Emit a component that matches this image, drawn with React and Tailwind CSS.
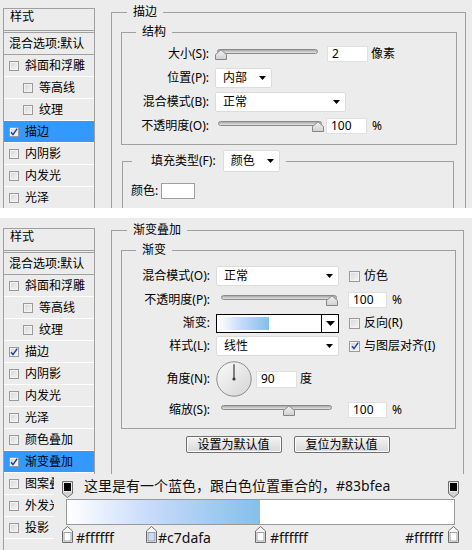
import React from "react";

const F = "font-['Noto_Sans','Noto_Sans_CJK_SC',sans-serif]";

function Check({ checked, small }) {
  return (
    <span
      className={`flex items-center justify-center shrink-0 border border-[#9a9a9a] bg-gradient-to-br from-[#d6d6d6] to-[#f6f6f6] shadow-[inset_0_0_0_1px_#f2f2f2] ${
        small ? "w-[10px] h-[10px]" : "w-[11px] h-[11px]"
      }`}
    >
      {checked && (
        <svg width="8" height="8" viewBox="0 0 8 8">
          <path d="M1 4.2 L3 6.6 L7.2 0.6" fill="none" stroke="#24429e" strokeWidth="1.5" />
        </svg>
      )}
    </span>
  );
}

function Arrow() {
  return (
    <svg width="7" height="4" viewBox="0 0 7 4" className="shrink-0">
      <path d="M0 0H7L3.5 4Z" fill="#000" />
    </svg>
  );
}

function Select({ text, className }) {
  return (
    <div
      className={`flex items-center justify-between bg-white border border-[#dcdcdc] rounded-[2px] pl-[7px] pr-[5px] ${className}`}
    >
      <span>{text}</span>
      <Arrow />
    </div>
  );
}

function Input({ v, className }) {
  return (
    <div className={`bg-white border border-[#e0e0e0] flex items-center pl-[4px] ${className}`}>{v}</div>
  );
}

function Thumb({ className }) {
  return (
    <svg className={`absolute top-[1px] ${className}`} width="12" height="11" viewBox="0 0 12 11">
      <defs>
        <linearGradient id="thg" x1="0" y1="0" x2="0" y2="1">
          <stop offset="0" stopColor="#f4f4f4" />
          <stop offset="1" stopColor="#cfcfcf" />
        </linearGradient>
      </defs>
      <path d="M0.5 10.5V5.6L6 0.8L11.5 5.6V10.5Z" fill="url(#thg)" stroke="#858585" />
    </svg>
  );
}

function Slider({ className, trackClass, thumbClass }) {
  return (
    <div className={`relative h-[12px] ${className}`}>
      <div
        className={`mt-[1px] h-[5px] rounded-full border border-[#8a8a8a] bg-gradient-to-b from-[#a9a9a9] to-[#e4e4e4] ${trackClass}`}
      />
      <Thumb className={thumbClass} />
    </div>
  );
}

const ITEMS = [
  ["斜面和浮雕", 0],
  ["等高线", 1],
  ["纹理", 1],
  ["描边", 0],
  ["内阴影", 0],
  ["内发光", 0],
  ["光泽", 0],
  ["颜色叠加", 0],
  ["渐变叠加", 0],
  ["图案叠加", 0],
  ["外发光", 0],
  ["投影", 0],
];

function StyleList({ selected, checked, count, className }) {
  return (
    <div
      className={`w-[92px] shrink-0 self-stretch overflow-hidden border-x border-t border-[#a0a0a0] ${className}`}
    >
      <div className="h-[22px] border-b border-[#a0a0a0] pl-[6px] leading-[14px] pt-[1px]">样式</div>
      <div className="mt-[1px] h-[23px] border-y border-[#a0a0a0] pl-[5px] flex items-center whitespace-nowrap">
        混合选项:默认
      </div>
      {ITEMS.slice(0, count).map(([name, indent], i) => (
        <div
          key={name}
          className={`h-[22px] border-b border-white flex items-center gap-[6px] ${
            indent ? "pl-[19px]" : "pl-[5px]"
          } ${i === selected ? "bg-[#3399ff]" : ""}`}
        >
          <Check small checked={checked.includes(i)} />
          <span className="whitespace-nowrap">{name}</span>
        </div>
      ))}
    </div>
  );
}

function Row({ label, children, className, labelClass }) {
  return (
    <div className={`flex items-center ${className}`}>
      <div className={`text-right shrink-0 whitespace-nowrap ${labelClass}`}>{label}</div>
      <div className="ml-[6px] flex items-center">{children}</div>
    </div>
  );
}

function TopPanel() {
  return (
    <div className="h-[208px] bg-[#ececec] flex pl-[3px] overflow-hidden">
      <StyleList selected={3} checked={[3]} count={7} className="mt-[8px]" />
      <fieldset className="ml-[16px] mt-[4px] w-[355px] h-[260px] shrink-0 self-start border border-[#a0a0a0]">
        <legend className="ml-[15px] px-[6px] leading-[16px]">描边</legend>
        <fieldset className="ml-[9px] mr-[8px] mt-[4px] pt-[2px] pb-[6px] border border-[#a0a0a0]">
          <legend className="ml-[14px] px-[6px] leading-[16px]">结构</legend>
          <Row label="大小(S):" className="h-[24px]" labelClass="w-[87px]">
            <Slider className="w-[104px]" trackClass="ml-[2px] w-[101px]" thumbClass="left-0" />
            <Input v="2" className="ml-[8px] w-[41px] h-[16px]" />
            <span className="ml-[3px]">像素</span>
          </Row>
          <Row label="位置(P):" className="h-[24px]" labelClass="w-[87px]">
            <Select text="内部" className="w-[57px] h-[20px]" />
          </Row>
          <Row label="混合模式(B):" className="h-[24px]" labelClass="w-[87px]">
            <Select text="正常" className="w-[131px] h-[20px]" />
          </Row>
          <Row label="不透明度(O):" className="h-[24px]" labelClass="w-[87px]">
            <Slider className="w-[108px]" trackClass="ml-[3px] w-[104px]" thumbClass="left-[97px]" />
            <Input v="100" className="ml-[3px] w-[41px] h-[16px]" />
            <span className="ml-[5px]">%</span>
          </Row>
        </fieldset>
        <fieldset className="ml-[10px] mr-[11px] mt-[5px] h-[120px] border border-[#a0a0a0]">
          <legend className="ml-[9px] pl-[19px] pr-[6px]">
            <div className="flex items-center h-[22px]">
              <span>填充类型(F):</span>
              <Select text="颜色" className="ml-[7px] w-[57px] h-[22px]" />
            </div>
          </legend>
          <div className="pt-[8px] pl-[8px] flex items-center h-[30px]">
            <span>颜色:</span>
            <div className="ml-[3px] w-[34px] h-[16px] bg-white border border-[#a0a0a0]" />
          </div>
        </fieldset>
      </fieldset>
    </div>
  );
}

function Dial() {
  return (
    <svg width="36" height="36" viewBox="0 0 36 36" className="shrink-0">
      <defs>
        <linearGradient id="dialg" x1="0" y1="0" x2="1" y2="1">
          <stop offset="0" stopColor="#fbfbfb" />
          <stop offset="1" stopColor="#d4d4d4" />
        </linearGradient>
      </defs>
      <circle cx="18" cy="18" r="17.2" fill="url(#dialg)" stroke="#8c8c8c" />
      <line x1="18" y1="18" x2="18" y2="3.2" stroke="#3a3a3a" strokeWidth="1.2" />
      <circle cx="18" cy="18" r="1.6" fill="#3a3a3a" />
    </svg>
  );
}

function GradPicker() {
  return (
    <div className="flex w-[123px] h-[19px] border border-black bg-white">
      <div className="flex-1 p-[2px] border-r border-black">
        <div className="h-full bg-[linear-gradient(90deg,#ffffff_0%,#c7dafa_21.8%,#83bfea_50%,#ffffff_50%)]" />
      </div>
      <div className="w-[16px] flex items-center justify-center">
        <svg width="9" height="5" viewBox="0 0 9 5">
          <path d="M0 0H9L4.5 5Z" fill="#000" />
        </svg>
      </div>
    </div>
  );
}

function Button({ children }) {
  return (
    <div className="w-[96px] h-[17px] border border-[#707070] rounded-[2px] bg-gradient-to-b from-[#f4f4f4] to-[#d8d8d8] shadow-[inset_0_0_0_1px_#fbfbfb] flex items-center justify-center leading-[14px]">
      {children}
    </div>
  );
}

function StopDown({ className }) {
  return (
    <svg className={className} width="11" height="17" viewBox="0 0 11 17">
      <path d="M0.5 0.5H10.5V12.5L5.5 16.5L0.5 12.5Z" fill="#d2d2d2" stroke="#6e6e6e" />
      <rect x="1.5" y="1.5" width="8" height="9" fill="#ffffff" />
      <rect x="2" y="2" width="7" height="8" fill="#000" />
    </svg>
  );
}

function StopUp({ className, color }) {
  return (
    <svg className={className} width="11" height="17" viewBox="0 0 11 17">
      <path d="M5.5 0.5L10.5 5V16.5H0.5V5Z" fill="#f6f6f6" stroke="#6e6e6e" />
      <rect x="2" y="6.5" width="7" height="8.5" fill={color} stroke="#8e8e8e" strokeWidth="0.8" />
    </svg>
  );
}

function GradientEditor() {
  return (
    <div className="absolute left-[54px] top-[256px] right-0 bottom-0 bg-[#ececec] pl-[12px] text-[14px] leading-[18px] text-[#111]">
      <div className="relative w-[389px] h-[25px]">
        <StopDown className="absolute left-[-4px] top-[7px]" />
        <StopDown className="absolute right-[-4px] top-[7px]" />
        <div className="pl-[18px] pt-[3px] whitespace-nowrap">这里是有一个蓝色，跟白色位置重合的，#83bfea</div>
      </div>
      <div className="w-[389px] h-[26px] border border-[#9a9a9a] bg-[linear-gradient(90deg,#ffffff_0%,#c7dafa_21.8%,#83bfea_50%,#ffffff_50%)]" />
      <div className="relative w-[389px] h-[24px]">
        <StopUp className="absolute left-[-4px] top-[1px]" color="#ffffff" />
        <span className="absolute left-[10px] top-[4px]">#ffffff</span>
        <StopUp className="absolute left-[80px] top-[1px]" color="#c7dafa" />
        <span className="absolute left-[92px] top-[4px]">#c7dafa</span>
        <StopUp className="absolute left-[189px] top-[1px]" color="#ffffff" />
        <span className="absolute left-[204px] top-[4px]">#ffffff</span>
        <StopUp className="absolute left-[382px] top-[1px]" color="#ffffff" />
        <span className="absolute right-[12px] top-[4px]">#ffffff</span>
      </div>
    </div>
  );
}

function BottomPanel() {
  return (
    <div className="relative h-[332px] bg-[#ececec] flex pl-[3px] overflow-hidden">
      <StyleList selected={8} checked={[3, 8]} count={12} className="mt-[10px]" />
      <fieldset className="ml-[16px] mt-[4px] w-[353px] h-[340px] shrink-0 self-start border border-[#a0a0a0]">
        <legend className="ml-[15px] px-[6px] leading-[16px]">渐变叠加</legend>
        <fieldset className="ml-[9px] mr-[7px] mt-[4px] pt-[6px] pb-[8px] border border-[#a0a0a0]">
          <legend className="ml-[14px] px-[6px] leading-[16px]">渐变</legend>
          <Row label="混合模式(O):" className="h-[24px]" labelClass="w-[88px]">
            <Select text="正常" className="w-[123px] h-[20px]" />
            <span className="ml-[10px]"><Check /></span>
            <span className="ml-[4px]">仿色</span>
          </Row>
          <Row label="不透明度(P):" className="h-[24px]" labelClass="w-[88px]">
            <Slider className="w-[123px]" trackClass="ml-[5px] w-[116px]" thumbClass="left-[110px]" />
            <Input v="100" className="ml-[9px] w-[39px] h-[16px]" />
            <span className="ml-[5px]">%</span>
          </Row>
          <Row label="渐变:" className="h-[22px]" labelClass="w-[88px]">
            <GradPicker />
            <span className="ml-[10px]"><Check /></span>
            <span className="ml-[4px]">反向(R)</span>
          </Row>
          <Row label="样式(L):" className="h-[24px]" labelClass="w-[88px]">
            <Select text="线性" className="w-[123px] h-[20px]" />
            <span className="ml-[10px]"><Check checked /></span>
            <span className="ml-[4px]">与图层对齐(I)</span>
          </Row>
          <Row label="角度(N):" className="h-[42px]" labelClass="w-[88px]">
            <Dial />
            <Input v="90" className="ml-[4px] w-[41px] h-[17px]" />
            <span className="ml-[3px]">度</span>
          </Row>
          <Row label="缩放(S):" className="h-[20px]" labelClass="w-[88px]">
            <Slider className="w-[123px]" trackClass="ml-[5px] w-[111px]" thumbClass="left-[67px]" />
            <Input v="100" className="ml-[9px] w-[39px] h-[16px]" />
            <span className="ml-[5px]">%</span>
          </Row>
        </fieldset>
        <div className="mt-[7px] flex justify-center gap-[12px]">
          <Button>设置为默认值</Button>
          <Button>复位为默认值</Button>
        </div>
      </fieldset>
      <GradientEditor />
    </div>
  );
}

export default function App() {
  return (
    <div className={`w-[472px] h-[550px] bg-white text-black text-[12px] leading-[16px] overflow-hidden ${F}`}>
      <TopPanel />
      <div className="h-[10px]" />
      <BottomPanel />
    </div>
  );
}
